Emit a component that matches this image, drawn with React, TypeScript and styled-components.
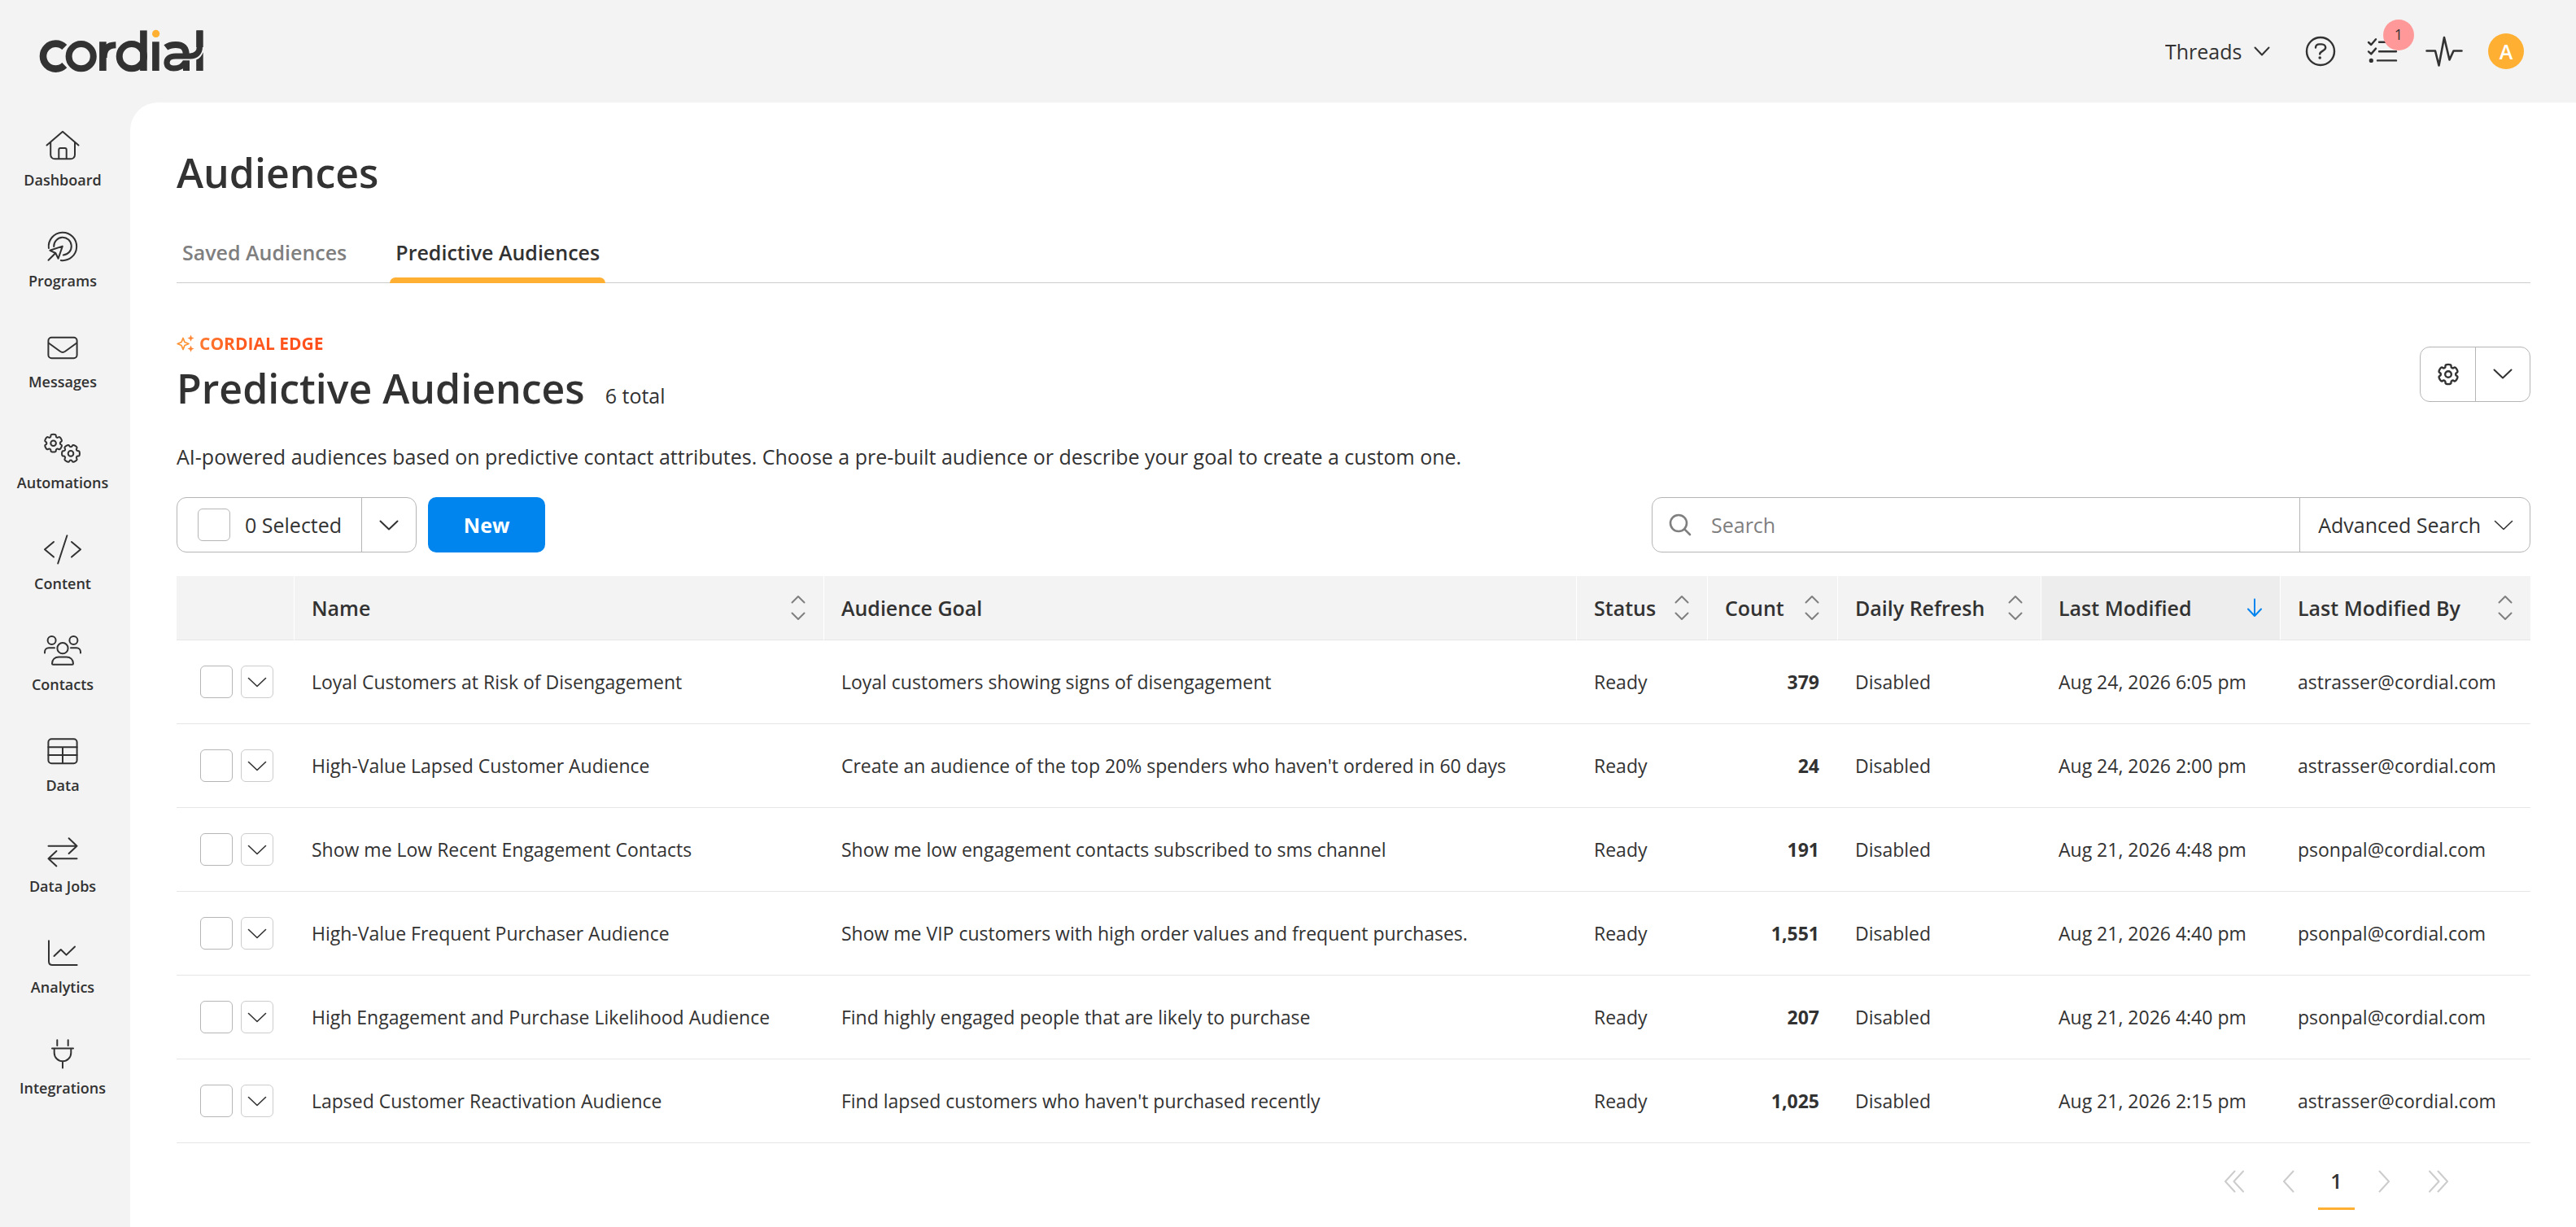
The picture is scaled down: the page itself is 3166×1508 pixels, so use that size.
import React from "react";
import styled, { createGlobalStyle, css } from "styled-components";

const ink = "#323232";
const grey = "#7f7f7f";
const line = "#b5b5b5";
const amber = "#ffb033";
const blue = "#0085ef";

const GlobalStyle = createGlobalStyle`
  *, *::before, *::after { box-sizing: border-box; }
  body {
    margin: 0;
    background: #f3f3f3;
    color: ${ink};
    font-family: "Open Sans", "Noto Sans", sans-serif;
    font-size: 25px;
    line-height: 36px;
  }
  button, input, select { font: inherit; color: inherit; }
  h1, h2, p, ul { margin: 0; padding: 0; }
`;

/* ---------- Shell ---------- */

const Page = styled.div`
  display: flex;
  flex-direction: column;
  min-height: 100vh;
`;

const TopBar = styled.header`
  display: flex;
  align-items: center;
  justify-content: space-between;
  height: 126px;
  padding: 0 64px 0 47px;
`;

const HomeLink = styled.a`
  display: flex;
  color: ${ink};
`;

const Tools = styled.div`
  display: flex;
  align-items: center;
  gap: 32px;
`;

const AccountPicker = styled.label`
  display: grid;
  align-items: center;
  margin-right: 8px;
  > * { grid-area: 1 / 1; }
  > svg { justify-self: end; pointer-events: none; }
`;

const AccountSelect = styled.select`
  appearance: none;
  border: 0;
  margin: 0;
  padding: 0 34px 0 0;
  background: transparent;
`;

const IconButton = styled.button`
  position: relative;
  display: flex;
  align-items: center;
  justify-content: center;
  width: 44px;
  height: 44px;
  padding: 0;
  border: 0;
  background: transparent;
`;

const Badge = styled.span`
  position: absolute;
  top: -17px;
  left: 23px;
  width: 38px;
  height: 38px;
  border-radius: 50%;
  background: #ff9999;
  font-size: 18px;
  line-height: 36px;
  text-align: center;
`;

const Avatar = styled(IconButton)`
  border-radius: 50%;
  background: ${amber};
  color: #fff;
  font-weight: 600;
`;

const Body = styled.div`
  display: flex;
  flex: 1;
`;

const SideNav = styled.nav`
  flex: none;
  width: 160px;
  padding: 29px 6px 0 0;
`;

const NavList = styled.ul`
  display: flex;
  flex-direction: column;
  gap: 46px;
  list-style: none;
`;

const NavLink = styled.a`
  display: flex;
  flex-direction: column;
  align-items: center;
  gap: 6px;
  color: ${ink};
  font-size: 18px;
  line-height: 24px;
  font-weight: 600;
  text-decoration: none;
`;

const Main = styled.main`
  flex: 1;
  min-width: 0;
  padding: 51px 56px 20px 57px;
  border-top-left-radius: 34px;
  background: #fff;
`;

/* ---------- Headings and tabs ---------- */

const headingText = css`
  font-size: 50px;
  line-height: 70px;
  font-weight: 600;
`;

const PageTitle = styled.h1`${headingText}`;

const Tabs = styled.nav`
  display: flex;
  gap: 46px;
  margin-top: 45px;
  border-bottom: 1px solid #cccccc;
`;

const Tab = styled.a<{ $active?: boolean }>`
  display: flex;
  flex-direction: column;
  gap: 13px;
  margin-bottom: -1px;
  color: ${(p) => (p.$active ? ink : grey)};
  font-weight: 600;
  text-decoration: none;
  &::after {
    content: "";
    height: 7px;
    border-radius: 7px 7px 0 0;
    background: ${(p) => (p.$active ? amber : "transparent")};
  }
`;

const TabText = styled.span`
  padding: 0 7px;
`;

const SectionHead = styled.div`
  display: flex;
  align-items: center;
  justify-content: space-between;
  margin-top: 59px;
`;

const Eyebrow = styled.p`
  display: flex;
  align-items: center;
  gap: 6px;
  margin-bottom: 5px;
  font-size: 21px;
  line-height: 30px;
  font-weight: 700;
`;

const EyebrowText = styled.span`
  background: linear-gradient(90deg, #ff7a30, #ff5a1f 35%, #ff4d1a);
  background-clip: text;
  color: transparent;
`;

const TitleRow = styled.div`
  display: flex;
  align-items: baseline;
  gap: 25px;
`;

const SectionTitle = styled.h2`${headingText}`;

const Description = styled.p`
  margin: 31px 0 32px;
`;

/* ---------- Toolbar ---------- */

const Toolbar = styled.div`
  display: flex;
  gap: 14px;
  margin-bottom: 29px;
`;

const Group = styled.div<{ $push?: boolean }>`
  display: flex;
  height: 68px;
  border: 1px solid ${line};
  border-radius: 12px;
  ${(p) => p.$push && "margin-left: auto;"}
  && > * + * { border-left: 1px solid ${line}; }
`;

const SelectAll = styled.label`
  display: flex;
  align-items: center;
  gap: 18px;
  padding: 0 24px 0 25px;
`;

const CheckBox = styled.input.attrs({ type: "checkbox" })`
  appearance: none;
  width: 40px;
  height: 40px;
  margin: 0;
  border: 1px solid ${line};
  border-radius: 6px;
  background: #fff;
`;

const GroupButton = styled.button`
  display: flex;
  align-items: center;
  justify-content: center;
  width: 67px;
  padding: 0;
  border: 0;
  background: transparent;
`;

const NewButton = styled.button`
  height: 68px;
  width: 144px;
  padding: 0;
  border: 0;
  border-radius: 10px;
  background: ${blue};
  color: #fff;
  font-weight: 700;
`;

const SearchGroup = styled(Group)`
  width: 1080px;
`;

const SearchField = styled.label`
  display: flex;
  flex: 1;
  align-items: center;
  gap: 24px;
  padding-left: 20px;
`;

const SearchInput = styled.input`
  flex: 1;
  min-width: 0;
  padding: 0;
  border: 0;
  outline: 0;
  background: transparent;
  &::placeholder { color: ${grey}; opacity: 1; }
`;

const AdvancedButton = styled.button`
  display: flex;
  align-items: center;
  gap: 16px;
  padding: 0 20px 0 22px;
  border: 0;
  background: transparent;
`;

/* ---------- Table ---------- */

const Table = styled.table`
  width: 100%;
  table-layout: fixed;
  border-collapse: separate;
  border-spacing: 0;
`;

const Col = styled.col<{ $w?: string }>`
  width: ${(p) => p.$w ?? "auto"};
`;

const HeadCell = styled.th<{ $sorted?: boolean }>`
  height: 79px;
  padding: 0 22px;
  border-bottom: 1px solid #e6e6e6;
  background: ${(p) => (p.$sorted ? "#ededed" : "#f3f3f3")};
  font-weight: 600;
  text-align: left;
  & + & {
    padding-left: 21px;
    border-left: 1px solid #fff;
  }
`;

const HeadButton = styled.button`
  display: flex;
  align-items: center;
  justify-content: space-between;
  width: 100%;
  padding: 0;
  border: 0;
  background: transparent;
  font-weight: 600;
  text-align: left;
  white-space: nowrap;
`;

const Cell = styled.td<{ $count?: boolean }>`
  height: 103px;
  padding: 0 22px;
  border-bottom: 1px solid #e6e6e6;
  font-size: 23px;
  line-height: 34px;
  white-space: nowrap;
  ${(p) => p.$count && "text-align: right; font-weight: 700;"}
`;

const RowTools = styled.div`
  display: flex;
  gap: 10px;
  margin-left: 7px;
`;

const RowMenu = styled.button`
  display: flex;
  align-items: center;
  justify-content: center;
  width: 40px;
  height: 40px;
  padding: 0;
  border: 1px solid #cccccc;
  border-radius: 6px;
  background: #fff;
`;

/* ---------- Pagination ---------- */

const Pager = styled.nav`
  display: flex;
  justify-content: flex-end;
  gap: 12px;
  margin-top: 14px;
  padding-right: 82px;
`;

const PagerButton = styled.button<{ $wide?: boolean }>`
  display: flex;
  align-items: center;
  justify-content: center;
  width: ${(p) => (p.$wide ? 62 : 48)}px;
  height: 66px;
  padding: 0;
  border: 0;
  background: transparent;
  color: #cccccc;
`;

const PageNumber = styled.a`
  width: 45px;
  height: 68px;
  border-bottom: 3px solid ${amber};
  color: ${ink};
  font-weight: 600;
  line-height: 64px;
  text-align: center;
  text-decoration: none;
`;

/* ---------- Icons ---------- */

const Stroke = styled.svg<{ $weight?: number }>`
  display: block;
  flex: none;
  fill: none;
  stroke: currentColor;
  stroke-width: ${(p) => p.$weight ?? 2};
  stroke-linecap: round;
  stroke-linejoin: round;
`;

const Chevron = ({ w = 22, h = 11, weight = 2 }: { w?: number; h?: number; weight?: number }) => (
  <Stroke width={w + 2} height={h + 2} viewBox={`-1 -1 ${w + 2} ${h + 2}`} $weight={weight} aria-hidden="true">
    <path d={`M0.5 0.5 L${w / 2} ${h - 0.5} L${w - 0.5} 0.5`} />
  </Stroke>
);

const gear = (cx: number, cy: number, r: number, turn: number) => {
  const pts: [number, number][] = [];
  for (let i = 0; i < 6; i++) {
    const mid = turn + i * 60;
    for (const [a, k] of [[-21, 0.74], [-17, 1.02], [17, 1.02], [21, 0.74]]) {
      const t = ((mid + a - 90) * Math.PI) / 180;
      pts.push([cx + r * k * Math.cos(t), cy + r * k * Math.sin(t)]);
    }
  }
  const half = (p: number[], q: number[]) => [p[0] + (q[0] - p[0]) * 0.5, p[1] + (q[1] - p[1]) * 0.5];
  const f = (p: number[]) => `${p[0].toFixed(2)} ${p[1].toFixed(2)}`;
  let d = `M${f(half(pts[pts.length - 1], pts[0]))}`;
  pts.forEach((p, i) => {
    d += `Q${f(p)} ${f(half(p, pts[(i + 1) % pts.length]))}`;
  });
  return d + "Z";
};

const Logo = () => (
  <svg width="203" height="54" viewBox="47 36 203 54" fill="none" stroke="currentColor" role="img" aria-label="Cordial">
    <path d="M79.3 58 A15.5 15.5 0 1 0 79.3 80.2" strokeWidth="8.6" />
    <circle cx="99.7" cy="69.2" r="15.1" strokeWidth="8" />
    <path d="M126.4 51.3 V87" strokeWidth="8.6" />
    <path d="M127.6 71 C127.6 61 132 55.4 142.4 55.2" strokeWidth="8" />
    <circle cx="161.8" cy="69.2" r="15.1" strokeWidth="8" />
    <path d="M176.4 37.4 V87" strokeWidth="8.6" />
    <path d="M191.4 51.3 V87" strokeWidth="8.6" />
    <circle cx="191.6" cy="41.4" r="4.6" fill={amber} stroke="none" />
    <path d="M203.8 58.4 C207 56 211 54.9 216 54.9 C224.5 54.9 228.8 58.8 228.8 68" strokeWidth="8" />
    <path d="M245.4 37.4 V57 C245.4 65 241 69 233.5 69 H216 C208.5 69 205 72.5 205 77 C205 81.5 208.5 84 213.5 84 C220.5 84 225.5 80.5 227.5 76.5" strokeWidth="7.2" />
    <path d="M241.2 37.4 H249.7 V58 H241.2 Z" fill="currentColor" stroke="none" />
    <path d="M224.6 74.2 H233 V87 H225 V81 Z" fill="currentColor" stroke="none" />
    <path d="M241.2 73.6 C245.5 71.6 248.2 68.2 249.7 64.2 V87 H241.2 Z" fill="currentColor" stroke="none" />
  </svg>
);

const HelpIcon = () => (
  <Stroke width="38" height="38" viewBox="0 0 38 38" $weight={2.4} aria-hidden="true">
    <circle cx="19" cy="19" r="17" />
    <path d="M13 14.5 C13 11.6 15 10.4 17.5 10.4 H20.5 C23.3 10.4 25.2 12.3 25.2 14.6 C25.2 18.6 18.2 18.6 18.2 22.4" />
    <circle cx="18.2" cy="27" r="1" fill="currentColor" strokeWidth="1.6" />
  </Stroke>
);

const TasksIcon = () => (
  <Stroke width="40" height="40" viewBox="0 0 40 40" $weight={2.4} aria-hidden="true">
    <path d="M3 9 L6.2 12 L12 5.2 M3 20.4 L6.2 23.4 L12 16.6 M16 8.7 H37 M16 20.2 H37 M14 31.4 H37" />
    <circle cx="6.3" cy="31.4" r="1.6" fill="currentColor" strokeWidth="2" />
  </Stroke>
);

const PulseIcon = () => (
  <Stroke width="46" height="38" viewBox="0 0 46 38" $weight={2.6} aria-hidden="true">
    <path d="M1.5 18.5 H12 L16.5 36.5 L23 2 L29.5 29.5 L34.5 18.5 H44.5" />
  </Stroke>
);

const SortIcon = () => (
  <Stroke width="18" height="32" viewBox="0 0 18 32" color={grey} aria-hidden="true">
    <path d="M1.5 9.5 L9 2 L16.5 9.5 M1.5 22.5 L9 30 L16.5 22.5" />
  </Stroke>
);

const SortedIcon = () => (
  <Stroke width="18" height="24" viewBox="1 0 18 24" color={blue} aria-hidden="true">
    <path d="M10 1.5 V22 M2 13.5 L10 22 L18 13.5" />
  </Stroke>
);

const SearchIcon = () => (
  <Stroke width="28" height="28" viewBox="0 0 28 28" color={grey} $weight={2.6} aria-hidden="true">
    <circle cx="12" cy="12" r="10" />
    <path d="M19.3 19.3 L26 26" />
  </Stroke>
);

const SparkIcon = () => (
  <svg width="22" height="22" viewBox="0 0 22 22" aria-hidden="true">
    <path d="M8 4.5 L10 9.5 L15 11.5 L10 13.5 L8 18.5 L6 13.5 L1.2 11.5 L6 9.5 Z" fill="none" stroke="#ff9436" strokeWidth="1.8" strokeLinejoin="round" />
    <path d="M17.5 0.5 L18.7 3.4 L21.6 4.6 L18.7 5.8 L17.5 8.7 L16.3 5.8 L13.4 4.6 L16.3 3.4 Z M17.5 13.5 L18.7 16.4 L21.6 17.6 L18.7 18.8 L17.5 21.7 L16.3 18.8 L13.4 17.6 L16.3 16.4 Z" fill="#ff8534" />
  </svg>
);

const GearIcon = () => (
  <Stroke width="28" height="28" viewBox="0 0 28 28" $weight={2.4} aria-hidden="true">
    <path d={gear(14, 14, 12.4, 0)} />
    <circle cx="14" cy="14" r="3.8" />
  </Stroke>
);

const navItems: { label: string; icon: React.ReactNode }[] = [
  {
    label: "Dashboard",
    icon: <path d="M4.5 23.5 L24 6.7 L43.5 23.5 M9.2 20 V35.3 A5 5 0 0 0 14.2 40.3 H34 A5 5 0 0 0 39 35.3 V20 M19.3 40 V29 A2 2 0 0 1 21.3 27 H26.7 A2 2 0 0 1 28.7 29 V40" />,
  },
  {
    label: "Programs",
    icon: <path d="M6.9 26 A17.2 17.2 0 1 1 21.8 41 M13.2 24 A10.8 10.8 0 1 1 24.8 34.4 M23.8 23.6 L8.4 28.8 L15.3 32 L18.6 38.8 Z M15.3 32 L6.5 40.8" />,
  },
  {
    label: "Messages",
    icon: (
      <>
        <rect x="6.4" y="11.7" width="35.2" height="25.6" rx="4" />
        <path d="M7 18.8 L20.8 28.8 Q24 31 27.2 28.8 L41 18.8" />
      </>
    ),
  },
  {
    label: "Automations",
    icon: (
      <>
        <path d={gear(12.6, 17.7, 11.2, 0)} />
        <circle cx="12.6" cy="17.7" r="3.3" />
        <path d={gear(34, 30.4, 11.2, 30)} />
        <circle cx="34" cy="30.4" r="3.3" />
      </>
    ),
  },
  { label: "Content", icon: <path d="M29.4 7.3 L18.2 41.5 M13 15 L2 24.3 L13 33.6 M35 15 L46 24.3 L35 33.6" /> },
  {
    label: "Contacts",
    icon: (
      <>
        <circle cx="24" cy="21.7" r="6.6" />
        <circle cx="10.6" cy="12" r="5" />
        <circle cx="37.4" cy="12" r="5" />
        <path d="M2 27.4 V26.5 C2 23.5 4 21.3 7 21.3 H14 M46 27.4 V26.5 C46 23.5 44 21.3 41 21.3 H34 M12.3 41.7 H35.7 Q37 41.7 37 40.4 C37 35.6 33.5 32.4 28.8 32.4 H19.2 C14.5 32.4 11 35.6 11 40.4 Q11 41.7 12.3 41.7 Z" />
      </>
    ),
  },
  {
    label: "Data",
    icon: (
      <>
        <rect x="6.4" y="9.3" width="35.2" height="30" rx="4" />
        <path d="M6.4 19.3 H41.6 M6.4 29 H41.6 M24 19.3 V39" />
      </>
    ),
  },
  { label: "Data Jobs", icon: <path d="M6.5 16.7 H41.5 M31.6 7.3 L41.5 16.7 L31.6 26 M41.5 32.2 H6.5 M16.4 23 L6.5 32.2 L16.4 41.4" /> },
  { label: "Analytics", icon: <path d="M7 9.3 V34.5 Q7 39 11.5 39 H41.6 M13.5 28 L21.8 20 L28.5 26.6 L39 16.5" /> },
  { label: "Integrations", icon: <path d="M17.3 7.3 V14 M30.7 7.3 V14 M11 17.4 H37 M13.7 17.4 V23 A10.3 10.3 0 0 0 34.3 23 V17.4 M24 33.4 V41.6" /> },
];

const columns: { label: string; width?: string; sort?: "none" | "descending" }[] = [
  { label: "Name", width: "22.5%", sort: "none" },
  { label: "Audience Goal" },
  { label: "Status", width: "161px", sort: "none" },
  { label: "Count", width: "160px", sort: "none" },
  { label: "Daily Refresh", width: "250px", sort: "none" },
  { label: "Last Modified", width: "294px", sort: "descending" },
  { label: "Last Modified By", width: "308px", sort: "none" },
];

const rows = [
  ["Loyal Customers at Risk of Disengagement", "Loyal customers showing signs of disengagement", "379", "Aug 24, 2026 6:05 pm", "astrasser@cordial.com"],
  ["High-Value Lapsed Customer Audience", "Create an audience of the top 20% spenders who haven't ordered in 60 days", "24", "Aug 24, 2026 2:00 pm", "astrasser@cordial.com"],
  ["Show me Low Recent Engagement Contacts", "Show me low engagement contacts subscribed to sms channel", "191", "Aug 21, 2026 4:48 pm", "psonpal@cordial.com"],
  ["High-Value Frequent Purchaser Audience", "Show me VIP customers with high order values and frequent purchases.", "1,551", "Aug 21, 2026 4:40 pm", "psonpal@cordial.com"],
  ["High Engagement and Purchase Likelihood Audience", "Find highly engaged people that are likely to purchase", "207", "Aug 21, 2026 4:40 pm", "psonpal@cordial.com"],
  ["Lapsed Customer Reactivation Audience", "Find lapsed customers who haven't purchased recently", "1,025", "Aug 21, 2026 2:15 pm", "astrasser@cordial.com"],
];

export default function App() {
  return (
    <Page>
      <GlobalStyle />
      <TopBar>
        <HomeLink href="#" aria-label="Cordial home">
          <Logo />
        </HomeLink>
        <Tools>
          <AccountPicker>
            <AccountSelect aria-label="Account">
              <option>Threads</option>
            </AccountSelect>
            <Chevron w={18} h={10} />
          </AccountPicker>
          <IconButton aria-label="Help"><HelpIcon /></IconButton>
          <IconButton aria-label="Tasks">
            <TasksIcon />
            <Badge>1</Badge>
          </IconButton>
          <IconButton aria-label="Activity"><PulseIcon /></IconButton>
          <Avatar>A</Avatar>
        </Tools>
      </TopBar>
      <Body>
        <SideNav aria-label="Main">
          <NavList>
            {navItems.map((item) => (
              <li key={item.label}>
                <NavLink href="#">
                  <Stroke width="48" height="48" viewBox="0 0 48 48" aria-hidden="true">{item.icon}</Stroke>
                  {item.label}
                </NavLink>
              </li>
            ))}
          </NavList>
        </SideNav>
        <Main>
          <PageTitle>Audiences</PageTitle>
          <Tabs aria-label="Audience types">
            <Tab href="#"><TabText>Saved Audiences</TabText></Tab>
            <Tab href="#" $active aria-current="page"><TabText>Predictive Audiences</TabText></Tab>
          </Tabs>
          <SectionHead>
            <div>
              <Eyebrow>
                <SparkIcon />
                <EyebrowText>CORDIAL EDGE</EyebrowText>
              </Eyebrow>
              <TitleRow>
                <SectionTitle>Predictive Audiences</SectionTitle>
                <span>6 total</span>
              </TitleRow>
            </div>
            <Group>
              <GroupButton aria-label="Settings"><GearIcon /></GroupButton>
              <GroupButton aria-label="More settings"><Chevron /></GroupButton>
            </Group>
          </SectionHead>
          <Description>
            AI-powered audiences based on predictive contact attributes. Choose a pre-built audience or describe your goal to create a custom one.
          </Description>
          <Toolbar>
            <Group>
              <SelectAll>
                <CheckBox />
                0 Selected
              </SelectAll>
              <GroupButton aria-label="Bulk actions"><Chevron /></GroupButton>
            </Group>
            <NewButton>New</NewButton>
            <SearchGroup $push>
              <SearchField>
                <SearchIcon />
                <SearchInput type="text" placeholder="Search" aria-label="Search" />
              </SearchField>
              <AdvancedButton>
                Advanced Search
                <Chevron weight={1.6} />
              </AdvancedButton>
            </SearchGroup>
          </Toolbar>
          <Table>
            <colgroup>
              <Col $w="144px" />
              {columns.map((c) => <Col key={c.label} $w={c.width} />)}
            </colgroup>
            <thead>
              <tr>
                <HeadCell aria-label="Row actions" />
                {columns.map((c) => (
                  <HeadCell key={c.label} scope="col" $sorted={c.sort === "descending"} aria-sort={c.sort}>
                    {c.sort ? (
                      <HeadButton>
                        {c.label}
                        {c.sort === "descending" ? <SortedIcon /> : <SortIcon />}
                      </HeadButton>
                    ) : (
                      c.label
                    )}
                  </HeadCell>
                ))}
              </tr>
            </thead>
            <tbody>
              {rows.map(([name, goal, count, modified, by]) => (
                <tr key={name}>
                  <Cell>
                    <RowTools>
                      <CheckBox aria-label={`Select ${name}`} />
                      <RowMenu aria-label={`Actions for ${name}`}><Chevron weight={1.6} /></RowMenu>
                    </RowTools>
                  </Cell>
                  <Cell>{name}</Cell>
                  <Cell>{goal}</Cell>
                  <Cell>Ready</Cell>
                  <Cell $count>{count}</Cell>
                  <Cell>Disabled</Cell>
                  <Cell>{modified}</Cell>
                  <Cell>{by}</Cell>
                </tr>
              ))}
            </tbody>
          </Table>
          <Pager aria-label="Pages">
            <PagerButton $wide aria-label="First page">
              <Stroke width="24" height="28" viewBox="0 0 24 28" aria-hidden="true"><path d="M12.5 1.5 L1 14 L12.5 26.5 M23 1.5 L11.5 14 L23 26.5" /></Stroke>
            </PagerButton>
            <PagerButton aria-label="Previous page">
              <Stroke width="14" height="28" viewBox="0 0 14 28" aria-hidden="true"><path d="M12.5 1.5 L1 14 L12.5 26.5" /></Stroke>
            </PagerButton>
            <PageNumber href="#" aria-current="page">1</PageNumber>
            <PagerButton aria-label="Next page">
              <Stroke width="14" height="28" viewBox="0 0 14 28" aria-hidden="true"><path d="M1.5 1.5 L13 14 L1.5 26.5" /></Stroke>
            </PagerButton>
            <PagerButton $wide aria-label="Last page">
              <Stroke width="24" height="28" viewBox="0 0 24 28" aria-hidden="true"><path d="M1 1.5 L12.5 14 L1 26.5 M11.5 1.5 L23 14 L11.5 26.5" /></Stroke>
            </PagerButton>
          </Pager>
        </Main>
      </Body>
    </Page>
  );
}
